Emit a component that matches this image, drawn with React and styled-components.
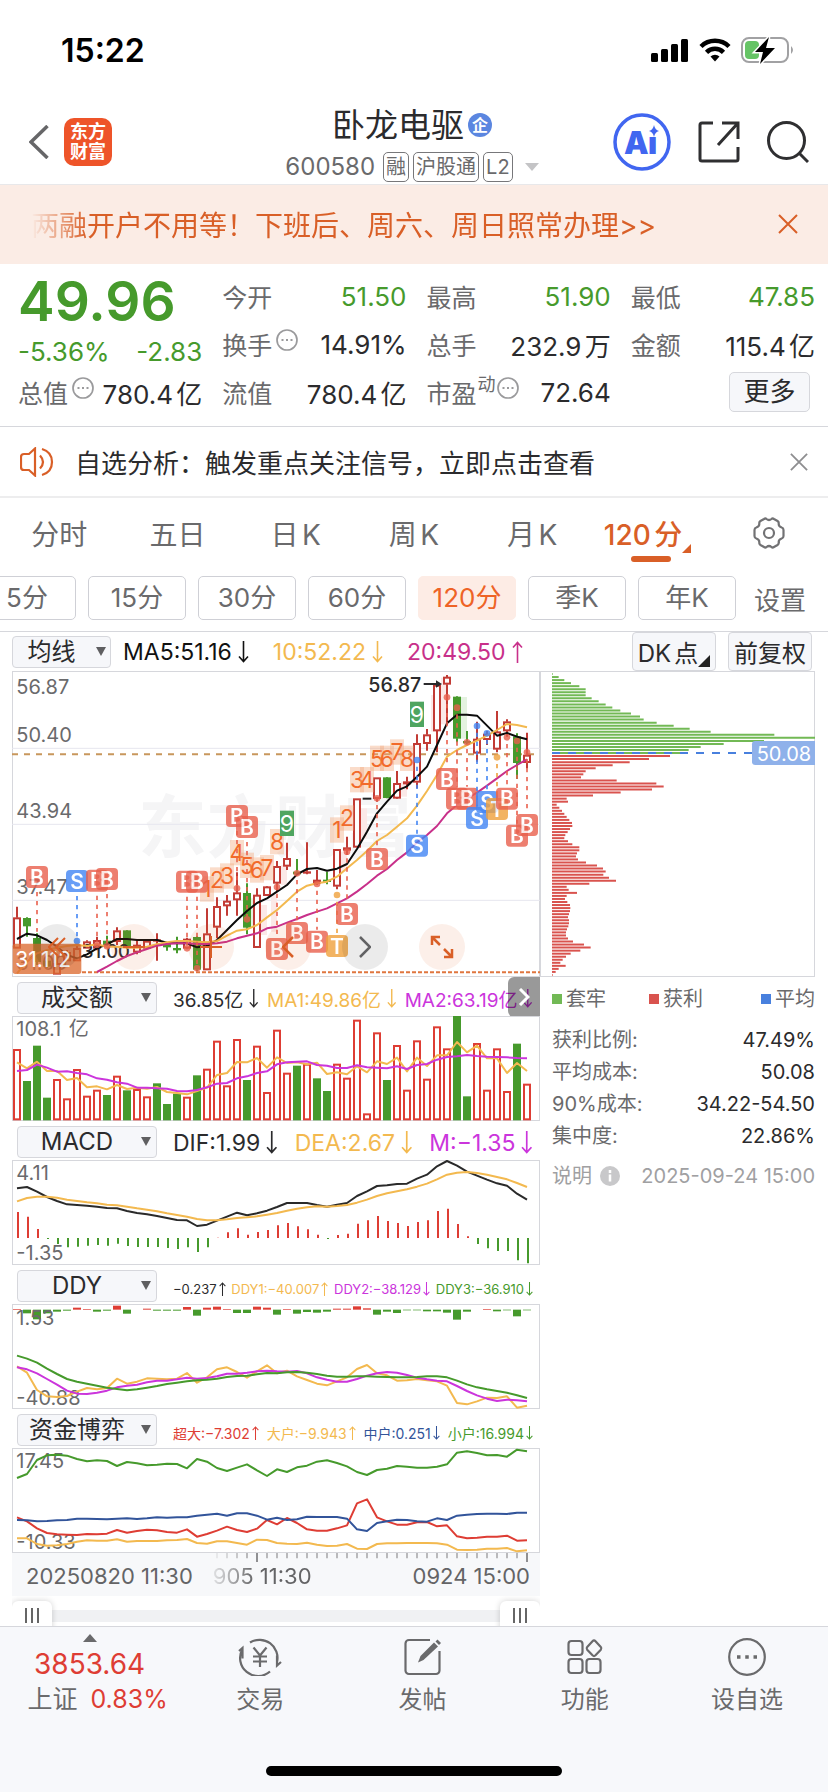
import React from "react";
import styled, { createGlobalStyle } from "styled-components";

const SANS = `Inter, "Noto Sans CJK SC", sans-serif`;

const C = {
  up: "#de3d34",
  candleUp: "#c23b35",
  down: "#469a2c",
  orange: "#d95f27",
  yellow: "#f3b94f",
  magenta: "#c8308a",
  violet: "#cb35dc",
  navy: "#32549a",
  ink: "#2b2b2d",
  grey: "#6a6a6c",
  line: "#d6d7dc",
  panel: "#f6f7fa",
};

const GlobalStyle = createGlobalStyle`
  * { box-sizing: border-box; }
  body { margin: 0; background: #fff; font-family: ${SANS}; color: ${C.ink}; text-autospace: normal; }
  button, select, input { font: inherit; color: inherit; margin: 0; }
  button { padding: 0; border: 0; background: none; cursor: pointer; }
  svg { display: block; }
`;

const Page = styled.div`
  display: flex;
  flex-direction: column;
  min-height: 100vh;
  overflow: hidden;
  white-space: nowrap;
`;

/* ---------- status bar and title ---------- */

const StatusBar = styled.div`
  display: flex;
  align-items: center;
  justify-content: space-between;
  height: 100px;
  padding: 0 33px 0 61px;
  font-size: 32px;
  font-weight: 600;
  color: #000;
`;

const StatusIcons = styled.div`
  display: flex;
  align-items: center;
  gap: 10px;
`;

const Header = styled.header`
  display: grid;
  grid-template-columns: 1fr auto 1fr;
  align-items: center;
  height: 85px;
  padding: 0 19px 4px 15px;
  border-bottom: 1px solid #e8e8ea;
`;

const HeaderSide = styled.div`
  display: flex;
  align-items: center;
  justify-content: ${(p) => (p.$end ? "flex-end" : "flex-start")};
  gap: ${(p) => (p.$end ? "27px" : "15px")};
  padding-left: 14px;
`;

const Logo = styled.a`
  display: grid;
  place-content: center;
  width: 48px;
  height: 48px;
  border-radius: 10px;
  background: #ee5429;
  color: #fff;
  font-size: 18px;
  font-weight: 700;
  line-height: 20px;
  text-decoration: none;
`;

const Identity = styled.div`
  display: flex;
  flex-direction: column;
  align-items: center;
  gap: 5px;
  padding-top: 4px;
`;

const StockName = styled.h1`
  display: flex;
  align-items: center;
  gap: 4px;
  margin: 0;
  font-size: 33px;
  font-weight: 400;
  line-height: 42px;
`;

const CompanyBadge = styled.span`
  display: grid;
  place-content: center;
  width: 24px;
  height: 24px;
  border-radius: 50%;
  background: #5b86e0;
  color: #fff;
  font-size: 16px;
  font-weight: 700;
`;

const CodeLine = styled.div`
  display: flex;
  align-items: center;
  gap: 4px;
  color: ${C.grey};
  font-size: 24px;
  line-height: 32px;
`;

const Code = styled.span`
  margin-right: 4px;
`;

const Tag = styled.span`
  padding: 0 2px;
  border: 1px solid #77777a;
  border-radius: 5px;
  font-size: 20px;
  line-height: 28px;
`;

const Caret = styled.svg`
  margin-left: 8px;
`;

/* ---------- banner, quote, notice ---------- */

const Banner = styled.div`
  display: flex;
  align-items: center;
  justify-content: space-between;
  height: 79px;
  padding: 0 30px 2px 31px;
  background: #fbece5;
  color: ${C.orange};
`;

const BannerLink = styled.a`
  color: inherit;
  font-size: 28px;
  text-decoration: none;
  -webkit-mask-image: linear-gradient(90deg, transparent, #000 56px);
  mask-image: linear-gradient(90deg, transparent, #000 56px);
`;

const Quote = styled.section`
  display: grid;
  grid-template-columns: repeat(4, 1fr);
  gap: 20px;
  padding: 8px 13px 10px 18px;
  border-bottom: 1px solid ${C.line};
  font-size: 26px;
`;

const QuoteColumn = styled.div`
  display: flex;
  flex-direction: column;
`;

const QuoteCell = styled.div`
  display: flex;
  align-items: center;
  justify-content: space-between;
  height: 48px;
  color: ${(p) => (p.$down ? C.down : C.ink)};
`;

const QuoteLabel = styled.span`
  display: flex;
  align-items: center;
  gap: 4px;
  color: ${C.grey};
  font-size: 25px;
`;

const InfoDots = styled.svg`
  margin-bottom: 8px;
`;

const Superscript = styled.sup`
  align-self: flex-start;
  margin: 0 -3px;
  font-size: 18px;
  line-height: 22px;
`;

const Price = styled.strong`
  height: 56px;
  color: ${C.down};
  font-size: 55px;
  font-weight: 600;
  line-height: 58px;
`;

const Change = styled.div`
  display: flex;
  justify-content: space-between;
  height: 40px;
  color: ${C.down};
  line-height: 48px;
`;

const MoreButton = styled.button`
  align-self: flex-end;
  width: 81px;
  height: 40px;
  margin: 4px 5px 0 0;
  border: 1px solid ${C.line};
  border-radius: 5px;
  background: ${C.panel};
  font-size: 26px;
  line-height: 36px;
`;

const Notice = styled.div`
  display: flex;
  align-items: center;
  height: 71px;
  padding: 0 20px;
  border-bottom: 2px solid #ededee;
  font-size: 26px;
`;

const NoticeText = styled.a`
  flex: 1;
  margin-left: 21px;
  color: inherit;
  text-decoration: none;
`;

/* ---------- period tabs ---------- */

const Tabs = styled.nav`
  display: grid;
  grid-template-columns: repeat(7, 1fr);
  height: 69px;
`;

const Tab = styled.button`
  position: relative;
  display: grid;
  place-content: center;
  color: ${(p) => (p.$active ? C.orange : C.grey)};
  font-size: 28px;
  font-weight: ${(p) => (p.$active ? 500 : 400)};
  &::after {
    content: "";
    display: ${(p) => (p.$active ? "block" : "none")};
    position: absolute;
    bottom: 5px;
    left: 50%;
    width: 40px;
    height: 6px;
    margin-left: -20px;
    border-radius: 3px;
    background: ${C.orange};
  }
`;

const TabText = styled.span`
  display: flex;
  align-items: flex-end;
  margin-right: 6px;
`;

const Periods = styled.div`
  display: flex;
  padding: 9px 0 11px;
  border-bottom: 1px solid ${C.line};
  color: ${C.grey};
  font-size: 26px;
  text-autospace: no-autospace;
`;

const ChipStrip = styled.div`
  display: flex;
  flex: 1;
  justify-content: flex-end;
  gap: 12px;
  min-width: 0;
  overflow: hidden;
`;

const Chip = styled.button`
  flex: 0 0 98px;
  height: 44px;
  border: 1px solid ${(p) => (p.$active ? "#fdece5" : "#cfd0d6")};
  border-radius: 5px;
  background: ${(p) => (p.$active ? "#fdece5" : "#fff")};
  color: ${(p) => (p.$active ? "#ee6326" : "inherit")};
  line-height: 40px;
`;

const SettingsButton = styled.button`
  width: 92px;
  padding-right: 4px;
`;

/* ---------- indicator headings ---------- */

const Overlays = styled.div`
  display: flex;
  align-items: center;
  height: 39px;
  padding: 0 16px 0 12px;
  font-size: 23px;
`;

const OverlayValues = styled.div`
  display: flex;
  flex: 1;
  gap: 24px;
  margin-left: 12px;
`;

const ToolButton = styled.button`
  display: flex;
  align-items: center;
  justify-content: center;
  width: 84px;
  height: 39px;
  margin-left: 12px;
  border: 1px solid ${C.line};
  border-radius: 4px;
  background: ${C.panel};
  font-size: 24px;
`;

const Corner = styled.svg`
  align-self: flex-end;
  margin-bottom: 3px;
`;

const PickerBox = styled.label`
  position: relative;
  flex: 0 0 ${(p) => (p.$small ? "99px" : "140px")};
  height: 32px;
`;

const PickerSelect = styled.select`
  width: 100%;
  height: 32px;
  padding: 0 20px 0 0;
  border: 1px solid ${C.line};
  border-radius: 4px;
  background: ${C.panel};
  color: ${C.ink};
  font-size: 24px;
  line-height: 30px;
  text-align: center;
  text-align-last: center;
  appearance: none;
`;

const PickerArrow = styled.svg`
  position: absolute;
  top: 11px;
  right: ${(p) => (p.$small ? "5px" : "6px")};
  pointer-events: none;
`;

const IndicatorHead = styled.div`
  position: relative;
  display: flex;
  align-items: center;
  gap: 16px;
  height: 39px;
  padding: 3px 7px 0 5px;
`;

const Values = styled.div`
  display: flex;
  flex: 1;
  justify-content: space-between;
  padding-top: ${(p) => (p.$size < 16 ? "5px" : "1px")};
  font-size: ${(p) => p.$size}px;
  text-autospace: no-autospace;
`;

const Value = styled.span`
  display: flex;
  align-items: center;
  gap: ${(p) => (p.$tight ? "2px" : "6px")};
  color: ${(p) => p.$color};
`;

const NextPane = styled.button`
  position: absolute;
  top: 0;
  right: 0;
  display: grid;
  place-content: center;
  width: 32px;
  height: 40px;
  border-radius: 6px 0 0 6px;
  background: rgba(0, 0, 0, 0.4);
`;

/* ---------- charts ---------- */

const Charts = styled.main`
  display: grid;
  grid-template-columns: 528fr 275fr;
  padding: 0 13px 0 12px;
`;

const Column = styled.div`
  min-width: 0;
`;

const Frame = styled.div`
  position: relative;
  box-shadow: inset 0 0 0 1px ${C.line};
`;

const Plot = styled.svg`
  width: 100%;
  height: auto;
  font-family: ${SANS};
`;

const ChartControls = styled.div`
  position: absolute;
  bottom: 7px;
  left: 22px;
  display: flex;
  gap: 31px;
`;

const RoundButton = styled.button`
  display: grid;
  place-content: center;
  width: 46px;
  height: 46px;
  border-radius: 50%;
  background: ${(p) => (p.$muted ? "rgba(0,0,0,.08)" : "rgba(226,96,40,.1)")};
  color: ${(p) => (p.$dark ? "#626264" : C.orange)};
`;

const Axis = styled.div`
  background: #f7f8fa;
  height: 43px;
`;

const AxisLabels = styled.div`
  display: flex;
  padding: 0 10px 0 14px;
  color: #646466;
  font-size: 22px;
  line-height: 28px;
`;

const AxisLabel = styled.span`
  flex: ${(p) => (p.$last ? "1" : "none")};
  margin-left: ${(p) => (p.$faded ? "20px" : "0")};
  text-align: ${(p) => (p.$last ? "right" : "left")};
  mask-image: ${(p) => (p.$faded ? "linear-gradient(90deg, rgba(0,0,0,.15), #000 42px)" : "none")};
`;

const RangeBox = styled.div`
  position: relative;
  height: 30px;
  overflow: hidden;
  &::before {
    content: "";
    display: block;
    height: 12px;
    margin-top: 14px;
    background: #f0f1f3;
  }
`;

const RangeInput = styled.input`
  position: absolute;
  top: 5px;
  left: 0;
  width: 100%;
  height: 36px;
  background: none;
  appearance: none;
  pointer-events: none;
  &::-webkit-slider-thumb {
    appearance: none;
    width: 40px;
    height: 36px;
    border-radius: 6px;
    background:
      linear-gradient(#666, #666) 13px 7px / 2px 15px no-repeat,
      linear-gradient(#666, #666) 19px 7px / 2px 15px no-repeat,
      linear-gradient(#666, #666) 25px 7px / 2px 15px no-repeat,
      #fff;
    box-shadow: 0 0 6px rgba(0, 0, 0, 0.18);
    pointer-events: auto;
  }
`;

/* ---------- cost distribution ---------- */

const Legend = styled.div`
  display: grid;
  grid-template-columns: 97fr 112fr auto;
  padding: 8px 0 9px 12px;
  color: ${C.grey};
  font-size: 20px;
  line-height: 28px;
`;

const LegendItem = styled.span`
  display: flex;
  align-items: center;
  gap: 4px;
  &::before {
    content: "";
    width: 10px;
    height: 10px;
    background: ${(p) => p.$color};
  }
`;

const Facts = styled.dl`
  margin: 0;
  padding: 2px 0 0 12px;
  font-size: 20px;
  line-height: 32px;
`;

const Fact = styled.div`
  display: flex;
  justify-content: space-between;
`;

const FactName = styled.dt`
  color: ${C.grey};
`;

const FactValue = styled.dd`
  margin: 0;
`;

const Explain = styled.div`
  display: flex;
  align-items: center;
  justify-content: space-between;
  padding: 8px 0 0 12px;
  color: #a0a0a2;
  font-size: 20px;
  line-height: 32px;
`;

const ExplainButton = styled.button`
  display: flex;
  align-items: center;
  gap: 8px;
`;

/* ---------- bottom bar ---------- */

const BottomBar = styled.footer`
  flex: 1;
  display: flex;
  flex-direction: column;
  justify-content: space-between;
  align-items: center;
  padding-bottom: 16px;
  border-top: 1px solid ${C.line};
  background: #f7f8fb;
`;

const BottomNav = styled.nav`
  display: grid;
  grid-template-columns: 179fr repeat(4, 162fr);
  width: 100%;
  height: 100px;
`;

const NavItem = styled.button`
  display: flex;
  flex-direction: column;
  align-items: center;
  gap: 7px;
  padding-top: 11px;
  color: ${C.grey};
  font-size: 24px;
  line-height: 34px;
`;

const IndexItem = styled.button`
  display: flex;
  flex-direction: column;
  align-items: center;
  padding-top: 7px;
  color: ${C.up};
  font-size: 25px;
  line-height: 34px;
`;

const IndexValue = styled.span`
  margin-top: 4px;
  font-size: 28px;
  line-height: 36px;
`;

const IndexLine = styled.span`
  display: flex;
  gap: 13px;
  padding-left: 16px;
`;

const Muted = styled.span`
  color: ${C.grey};
`;

const HomeIndicator = styled.div`
  width: 296px;
  height: 10px;
  border-radius: 5px;
  background: #000;
`;

/* ---------- data ---------- */

const STEP = 30;
const px = (i) => 51 + i * STEP;

// high, body top, body bottom, low, u = up / d = down
const CANDLES = [
  [725, 758, 850, 850, "u"], [757, 760, 783, 815, "d"], [805, 820, 890, 900, "d"], [880, 888, 904, 908, "d"],
  [870, 895, 928, 928, "u"], [855, 862, 888, 888, "u"], [842, 850, 888, 888, "u"], [826, 830, 850, 850, "u"],
  [815, 826, 850, 856, "u"], [812, 828, 838, 848, "d"], [787, 797, 830, 840, "u"], [795, 797, 845, 852, "d"],
  [826, 840, 862, 868, "u"], [826, 828, 850, 852, "u"], [805, 824, 828, 887, "u"], [832, 838, 846, 857, "d"],
  [815, 850, 854, 865, "d"], [818, 822, 850, 853, "u"], [814, 817, 913, 918, "d"], [730, 806, 915, 915, "u"],
  [697, 724, 787, 820, "u"], [690, 708, 723, 752, "u"], [622, 683, 705, 752, "u"], [655, 685, 787, 808, "d"],
  [670, 690, 848, 848, "u"], [663, 665, 692, 692, "u"], [588, 604, 655, 680, "u"], [533, 580, 604, 615, "u"],
  [582, 621, 627, 630, "d"], [532, 620, 624, 628, "u"], [615, 645, 655, 660, "u"], [620, 645, 648, 658, "d"],
  [553, 553, 664, 673, "u"], [515, 548, 556, 570, "u"], [401, 401, 547, 547, "u"], null,
  [338, 338, 401, 410, "u"], [336, 338, 398, 400, "d"], [318, 355, 400, 402, "u"], [335, 350, 357, 373, "u"],
  [208, 235, 352, 370, "u"], [192, 209, 236, 257, "u"], [56, 60, 198, 262, "u"], [30, 36, 58, 180, "u"],
  [94, 96, 220, 232, "d"], [198, 229, 234, 240, "d"], [170, 222, 265, 290, "u"], [198, 207, 224, 240, "u"],
  [138, 200, 253, 262, "u"], [163, 170, 198, 215, "u"], [205, 215, 293, 342, "d"], [203, 270, 293, 310, "u"],
];

const MA5 = [822, 806, 811, 825, 845, 870, 880, 868, 850, 838, 822, 822, 825, 825, 825, 833, 835, 835, 847, 843, 825, 795, 765, 738, 714, 700, 680, 660, 628, 612, 609, 617, 611, 597, 552, 500, 445, 410, 377, 364, 335, 305, 240, 175, 149, 149, 152, 182, 212, 204, 215, 223];
const MA10 = [925, 890, 865, 855, 848, 843, 840, 843, 838, 845, 845, 848, 848, 845, 838, 832, 828, 828, 830, 832, 828, 812, 797, 793, 780, 757, 735, 708, 680, 662, 655, 650, 635, 610, 585, 558, 528, 510, 485, 460, 422, 378, 330, 275, 255, 240, 227, 212, 195, 177, 180, 187];
const MA20 = [921, 905, 888, 873, 862, 852, 842, 837, 835, 835, 837, 837, 835, 830, 820, 812, 805, 790, 785, 773, 762, 750, 740, 730, 715, 700, 680, 657, 632, 612, 585, 562, 532, 510, 483, 445, 420, 400, 383, 362, 340, 318, 300, 283];

// candle index, badge centre, signal point, kind
const SIGNALS = [
  [2, 636, 800, "B"], [6, 648, 828, "S"], [8, 647, 840, "B"], [9, 642, 844, "B"], [17, 650, 850, "B"],
  [18, 650, 910, "B"], [22, 453, 670, "B"], [23, 486, 763, "B"], [26, 852, 666, "B"], [28, 804, 625, "B"],
  [30, 830, 657, "B"], [32, 843, 690, "T"], [33, 747, 560, "B"], [36, 582, 400, "B"], [40, 542, 285, "S"],
  [43, 342, 97, "B"], [44, 401, 128, "B"], [45, 401, 232, "B"], [46, 459, 183, "S"], [47, 411, 205, "S"],
  [48, 432, 277, "T"], [49, 401, 217, "B"], [50, 512, 228, "B"], [51, 480, 262, "B"],
];
const SIGNAL_COLORS = { B: "#e9604d", S: "#4285f4", T: "#f0a13c" };

// candle index, centre, number
const COUNTS = [
  [19, 672, 1], [20, 645, 2], [21, 633, 3], [22, 563, 4], [23, 601, 5], [24, 615, 6], [25, 608, 7], [26, 530, 8], [27, 475, 9],
  [32, 495, 1], [33, 459, 2], [34, 344, 3], [35, 344, 4], [36, 280, 5], [37, 280, 6], [38, 261, 7], [39, 280, 8], [40, 148, 9],
];

const SHADES = [
  [25, 690, 110, "u"], [24, 720, 90, "u"], [23, 700, 85, "d"], [26, 600, 60, "u"], [34, 430, 90, "u"],
  [36, 345, 55, "u"], [38, 350, 45, "u"], [41, 90, 110, "u"], [42, 38, 140, "u"], [44, 96, 125, "d"], [32, 560, 60, "u"],
];

const VOLUME = [224, -320, -214, -370, 314, 372, 284, 364, 346, -362, 304, -348, 344, 366, -327, -389, -358, 367, -303, 283, 199, 333, 194, -317, 214, 353, 166, 295, -274, 268, -312, -350, 268, 310, 136, 417, 174, -317, 212, 346, 198, 313, 156, 222, -125, -366, 206, 346, 222, 350, -208, 328];
const VOL1 = [264, 282, 262, 290, 290, 317, 311, 339, 336, 345, 332, 344, 340, 343, 338, 353, 356, 360, 350, 340, 302, 296, 263, 264, 251, 280, 249, 266, 264, 270, 265, 299, 294, 300, 276, 294, 261, 269, 250, 291, 250, 275, 243, 243, 203, 234, 214, 252, 252, 296, 266, 290];
const VOL2 = [290, 287, 271, 280, 292, 291, 296, 300, 312, 316, 324, 328, 340, 340, 342, 343, 350, 351, 347, 339, 328, 326, 312, 306, 296, 291, 270, 264, 262, 261, 272, 274, 281, 281, 273, 279, 280, 282, 276, 284, 272, 269, 256, 248, 246, 242, 245, 247, 248, 249, 251, 252];

const MACD = [712, 726, 763, 793, 808, 818, 816, 813, 811, 813, 807, 814, 817, 817, 817, 820, 823, 818, 832, 818, 789, 773, 761, 780, 772, 766, 752, 745, 755, 764, 780, 793, 781, 777, 747, 737, 724, 739, 745, 754, 742, 737, 709, 702, 748, 785, 808, 821, 829, 829, 857, 866];
const DIF = [641, 637, 651, 667, 679, 689, 691, 693, 696, 700, 701, 709, 715, 719, 724, 730, 736, 737, 754, 750, 738, 726, 714, 722, 716, 708, 697, 685, 685, 685, 691, 696, 690, 685, 664, 650, 634, 632, 628, 627, 612, 600, 575, 559, 573, 591, 603, 615, 626, 633, 657, 675];
const DEA = [680, 670, 666, 666, 669, 675, 679, 683, 686, 690, 692, 696, 701, 705, 710, 716, 721, 726, 733, 737, 737, 734, 730, 728, 725, 720, 715, 708, 702, 698, 695, 696, 694, 691, 684, 675, 664, 656, 650, 644, 636, 627, 614, 600, 594, 592, 595, 600, 607, 614, 625, 637];

const DDX = [145, 158, 176, 158, 153, 150, 141, 145, 153, 150, 135, 159, 147, 144, 150, 150, 150, 139, 165, 141, 138, 145, 157, 157, 138, 141, 162, 145, 159, 154, 156, 153, 144, 144, 137, 143, 162, 153, 157, 149, 149, 152, 152, 156, 177, 153, 147, 145, 152, 149, 167, 149];
const DDY1 = [317, 336, 388, 407, 409, 406, 393, 382, 386, 382, 354, 369, 363, 353, 354, 356, 354, 337, 366, 350, 326, 320, 334, 351, 332, 314, 338, 330, 347, 358, 369, 374, 362, 350, 325, 313, 338, 344, 360, 359, 355, 359, 362, 375, 427, 431, 422, 411, 412, 407, 441, 435];
const DDY2 = [320, 326, 338, 355, 372, 390, 399, 400, 396, 390, 380, 375, 372, 365, 360, 360, 356, 351, 354, 352, 347, 339, 339, 336, 332, 330, 332, 333, 331, 338, 350, 357, 363, 363, 355, 345, 338, 334, 336, 343, 351, 356, 360, 362, 376, 391, 404, 414, 421, 417, 419, 422];
const DDY3 = [285, 294, 306, 324, 340, 355, 363, 369, 375, 381, 385, 389, 386, 381, 376, 370, 366, 362, 359, 357, 354, 349, 346, 345, 341, 337, 338, 335, 334, 336, 340, 345, 348, 348, 347, 347, 348, 349, 350, 350, 349, 347, 347, 350, 360, 371, 380, 386, 391, 396, 404, 412];

const SMALL = [652, 640, 598, 584, 582, 585, 595, 602, 599, 601, 616, 604, 608, 614, 612, 609, 610, 623, 595, 603, 622, 631, 621, 611, 629, 646, 626, 634, 620, 615, 603, 599, 607, 617, 634, 643, 628, 624, 616, 618, 621, 621, 618, 611, 576, 572, 577, 584, 583, 588, 567, 572];
const MEDIUM = [778, 779, 782, 781, 779, 778, 774, 774, 775, 776, 774, 773, 775, 773, 770, 771, 770, 770, 765, 762, 759, 765, 758, 758, 765, 777, 771, 778, 776, 768, 769, 769, 769, 774, 806, 811, 787, 782, 777, 778, 782, 783, 773, 778, 765, 762, 760, 759, 759, 760, 756, 756];
const HUGE = [770, 782, 803, 817, 821, 822, 823, 820, 821, 819, 808, 816, 811, 807, 809, 814, 816, 806, 828, 820, 810, 798, 808, 814, 804, 778, 791, 772, 787, 806, 810, 810, 803, 794, 728, 716, 770, 782, 792, 792, 785, 784, 797, 794, 827, 833, 831, 828, 828, 825, 840, 839];
const LARGE = [833, 833, 850, 855, 854, 850, 843, 839, 840, 840, 836, 843, 841, 841, 841, 839, 838, 835, 847, 849, 842, 842, 847, 852, 837, 838, 847, 849, 850, 846, 852, 856, 855, 850, 864, 865, 850, 848, 848, 847, 847, 847, 848, 852, 867, 868, 867, 864, 864, 862, 872, 869];

const TRAPPED = [38, 56, 73, 93, 118, 137, 137, 137, 155, 176, 197, 217, 241, 273, 300, 311, 350, 401, 449, 512, 703, 827, 672, 551, 482, 446, 440];
const PROFIT = [390, 327, 269, 218, 167, 137, 130, 123, 230, 349, 371, 336, 242, 159, 80, 84, 50, 58, 66, 73, 80, 88, 96, 97, 90, 83, 76, 73, 84, 97, 118, 118, 111, 108, 114, 138, 171, 189, 197, 190, 207, 228, 148, 80, 86, 111, 80, 75, 82, 90, 91, 90, 87, 84, 87, 87, 85, 81, 78, 78, 84, 99, 132, 152, 121, 92, 78, 68, 61, 77, 56, 47, 38];

/* ---------- drawing helpers ---------- */

function Line({ data, color, start = 0, width = 6 }) {
  const points = data.map((y, i) => `${px(i + start)},${y}`).join(" ");
  return <polyline points={points} fill="none" stroke={color} strokeWidth={width} strokeLinejoin="round" />;
}

function ScaleText({ y, x = 49, children }) {
  return <text x={x} y={y} fontSize="60" fill="#6a6a6c">{children}</text>;
}

function Arrow({ up, height }) {
  return (
    <svg width={height / 2} height={height} viewBox="0 0 11 22" fill="none" stroke="currentColor" strokeWidth="1.6">
      <path d={up ? "M5.5 22V1M1 6.5l4.5-5 4.5 5" : "M5.5 0v21M1 15.500l4.500 5 4.500-5"} />
    </svg>
  );
}

function Cross({ size, color, width = 2 }) {
  return (
    <svg width={size} height={size} viewBox="0 0 20 20" stroke={color} strokeWidth={width}>
      <path d="M1 1l18 18M19 1L1 19" />
    </svg>
  );
}

function Dots() {
  return (
    <InfoDots width="22" height="22" viewBox="0 0 22 22" fill="none" stroke="#9a9a9c">
      <circle cx="11" cy="11" r="10" strokeWidth="1.700" />
      <path d="M5.500 11h2M10 11h2M14.500 11h2" strokeWidth="2" />
    </InfoDots>
  );
}

function Picker({ label, value, options, small }) {
  return (
    <PickerBox $small={small}>
      <PickerSelect defaultValue={value} aria-label={label}>
        {options.map((o) => <option key={o}>{o}</option>)}
      </PickerSelect>
      <PickerArrow $small={small} width="10" height="9" viewBox="0 0 10 9"><path d="M0 0h10L5 9z" fill="#5f5f61" /></PickerArrow>
    </PickerBox>
  );
}

const INDICATORS = ["成交额", "MACD", "DDY", "资金博弈"];

function Indicator({ name, size, values, children, next }) {
  return (
    <>
      <IndicatorHead>
        <Picker label="指标" value={name} options={INDICATORS} />
        <Values $size={size}>
          {values.map(([text, color, up]) => (
            <Value key={text} $color={color} $tight={size < 16}>{text}<Arrow up={up} height={size < 16 ? 14 : size} /></Value>
          ))}
        </Values>
        {next && (
          <NextPane aria-label="展开">
            <svg width="12" height="18" viewBox="0 0 12 18" fill="none" stroke="#fff" strokeWidth="3"><path d="M2 1l8 8-8 8" /></svg>
          </NextPane>
        )}
      </IndicatorHead>
      <Frame>{children}</Frame>
    </>
  );
}

function CandleChart() {
  return (
    <Plot viewBox="36 18 1584 918" role="img" aria-label="120分K线">
      <text x="415" y="560" fontSize="205" fontWeight="700" fill="#f5f5f6">东方财富</text>
      <path d="M36 250H1620M36 478H1620M36 706H1620" stroke="#e6e6ee" strokeWidth="3" />
      {SHADES.map(([i, y, h, k]) => (
        <rect key={i} x={px(i) + 12} y={y} width="18" height={h} fill={k === "u" ? "#fbe9e8" : "#e4f2e0"} />
      ))}
      <path d="M36 268H1602" stroke="#c8975c" strokeWidth="6" strokeDasharray="18 18" />
      <path d="M246 922H1620" stroke="#e0763f" strokeWidth="6" strokeDasharray="12 6" />
      <ScaleText y={88}>56.87</ScaleText>
      <ScaleText y={232}>50.40</ScaleText>
      <ScaleText y={458}>43.94</ScaleText>
      <ScaleText y={687}>37.47</ScaleText>
      <ScaleText y={916}>31.00</ScaleText>
      {CANDLES.map((c, i) => {
        if (!c) return <path key={i} d={`M${px(i) - 13} 401h26`} stroke="#222" strokeWidth="6" />;
        const [hi, top, bottom, lo, kind] = c;
        const color = kind === "u" ? C.candleUp : C.down;
        return (
          <g key={i} stroke={color} strokeWidth="6">
            <path d={`M${px(i)} ${hi}V${top}M${px(i)} ${bottom}V${lo}`} />
            <rect x={px(i) - 9} y={top + 2} width="18" height={Math.max(bottom - top - 4, 1)} fill={kind === "u" ? "#fff" : color} />
          </g>
        );
      })}
      <text x="246" y="879" fontSize="55" fontWeight="500" fill={C.ink}>31.00</text>
      <text x="1105" y="80" fontSize="59" fontWeight="500" fill={C.ink}>56.87</text>
      <path d="M1271 57h48" stroke={C.ink} strokeWidth="6" />
      <path d="M1308 46l18 11-18 11z" fill={C.ink} />
      {COUNTS.map(([i, y, n]) => (
        <g key={i}>
          <rect x={px(i) - 21} y={y - 38} width="42" height="76" fill={n === 9 ? "#4fa560" : "#f2a274"} fillOpacity={n === 9 ? 1 : 0.38} />
          <text x={px(i)} y={y + 25} fontSize="69" textAnchor="middle" fill={n === 9 ? "#fff" : "#f26a2a"}>{n}</text>
        </g>
      ))}
      <Line data={MA5} color="#0c0c0c" />
      <Line data={MA10} color={C.yellow} />
      <Line data={MA20} color={C.magenta} start={8} />
      {SIGNALS.map(([i, y, dot, kind]) => (
        <g key={i} opacity="0.8">
          <path d={`M${px(i)} ${y < dot ? y + 45 : dot + 20}V${y < dot ? dot : y - 36}`} stroke={SIGNAL_COLORS[kind]} strokeWidth="6" strokeDasharray="13 14" />
          {dot !== 800 && <circle cx={px(i)} cy={dot} r="10" fill={SIGNAL_COLORS[kind]} />}
          <rect x={px(i) - 33} y={y - 33} width="66" height="66" rx="12" fill={SIGNAL_COLORS[kind]} />
          <text x={px(i)} y={y + 23} fontSize="63" fontWeight="600" textAnchor="middle" fill="#fff">{kind}</text>
        </g>
      ))}
      <rect x="38" y="836" width="206" height="91" rx="8" fill="#dd6c32" fillOpacity="0.78" />
      <text x="46" y="906" fontSize="63" fill="#fff">31.112</text>
    </Plot>
  );
}

function VolumeChart() {
  return (
    <Plot viewBox="36 125 1584 315" role="img" aria-label="成交额">
      {VOLUME.map((v, i) => {
        const y = Math.abs(v);
        return v < 0
          ? <rect key={i} x={px(i) - 12} y={y} width="24" height={438 - y} fill={C.down} />
          : <rect key={i} x={px(i) - 9} y={y + 3} width="18" height={432 - y} fill="#fff" stroke={C.up} strokeWidth="6" />;
      })}
      <ScaleText y={186}>108.1亿</ScaleText>
      <Line data={VOL1} color={C.yellow} />
      <Line data={VOL2} color={C.violet} />
    </Plot>
  );
}

function MacdChart() {
  return (
    <Plot viewBox="36 556 1584 315" role="img" aria-label="MACD">
      {MACD.map((y, i) => (
        <path key={i} d={`M${px(i) + 3} 790V${y}`} stroke={y < 790 ? C.up : C.down} strokeWidth="6" />
      ))}
      <ScaleText y={617}>4.11</ScaleText>
      <ScaleText y={857}>-1.35</ScaleText>
      <Line data={DIF} color="#2a2a2a" />
      <Line data={DEA} color={C.yellow} />
    </Plot>
  );
}

function DdyChart() {
  return (
    <Plot viewBox="36 130 1584 315" role="img" aria-label="DDY">
      {DDX.map((y, i) => (
        <rect key={i} x={px(i) - 12} y={Math.min(y, 147)} width="24" height={Math.abs(y - 147)} fill={y < 147 ? C.up : C.down} />
      ))}
      <ScaleText y={192}>1.53</ScaleText>
      <ScaleText y={432}>-40.88</ScaleText>
      <Line data={DDY1} color={C.yellow} />
      <Line data={DDY2} color={C.violet} />
      <Line data={DDY3} color={C.down} />
    </Plot>
  );
}

function FundsChart() {
  return (
    <Plot viewBox="36 562 1584 315" role="img" aria-label="资金博弈">
      <ScaleText y={623}>17.45</ScaleText>
      <ScaleText y={864}>-10.33</ScaleText>
      <Line data={SMALL} color={C.down} />
      <Line data={HUGE} color={C.up} />
      <Line data={MEDIUM} color={C.navy} />
      <Line data={LARGE} color={C.yellow} />
    </Plot>
  );
}

function CostChart() {
  return (
    <Plot viewBox="0 138 825 918" role="img" aria-label="筹码分布">
      {[...TRAPPED, ...PROFIT].map((x, i) => (
        <path key={i} d={`M36 ${147 + i * 9.12}H${x}`} stroke={i < TRAPPED.length ? "#72b955" : "#d9534e"} strokeWidth="6" />
      ))}
      <path d="M36 384H640" stroke="#4880de" strokeWidth="6" strokeDasharray="24 24" />
      <path d="M646 348H825V420H646q-10 0-10-10V358q0-10 10-10z" fill="#8fb1ea" />
      <text x="650" y="407" fontSize="60" fill="#fff">50.08</text>
    </Plot>
  );
}

function AxisTicks() {
  const ticks = [];
  for (let i = 20; i < 52; i += 1) {
    const major = i === 24 || i === 51;
    ticks.push(
      <path key={i} d={`M${px(i)} 0V${major ? 27 : 16}`} stroke={major ? "#909092" : "#b9b9bb"} strokeWidth="6" opacity={i < 24 ? 0.25 * (i - 19) : 1} />
    );
  }
  return <Plot viewBox="36 0 1584 27" aria-hidden="true">{ticks}</Plot>;
}

/* ---------- page ---------- */

const NAV = [
  ["交易", <svg key="t" width="44" height="38" viewBox="0 0 44 38" fill="none" stroke="#6a6a6c" strokeWidth="2.200">
    <path d="M12 4.500A18 18 0 0 1 39 24M32 33.500A18 18 0 0 1 4.500 11M4.500 20.500V10L1 13M39 17.500V27.500L43 24" />
    <path d="M15.500 9.500l6.500 8 6.500-8M22 17.500v11.500M15 18.500h14M15 23.500h14" />
  </svg>],
  ["发帖", <svg key="p" width="38" height="38" viewBox="0 0 38 38" fill="none" stroke="#6a6a6c" strokeWidth="2.200">
    <path d="M26 2H5a3.500 3.500 0 0 0-3.500 3.500v27A3.500 3.500 0 0 0 5 36h27a3.500 3.500 0 0 0 3.500-3.500V13" />
    <path d="M14 24.500L16.500 18 30 4.500l4 4L19.500 22z" fill="#6a6a6c" stroke="none" />
    <path d="M31.500 3.500l2-2 3.500 3.500-2 2z" fill="#6a6a6c" stroke="none" />
  </svg>],
  ["功能", <svg key="f" width="38" height="38" viewBox="0 0 38 38" fill="none" stroke="#6a6a6c" strokeWidth="2.200">
    <rect x="2.500" y="3" width="14" height="14" rx="3" /><rect x="2.500" y="21" width="14" height="14" rx="3" />
    <rect x="20.500" y="21" width="14" height="14" rx="3" /><path d="M26.500 3.200q1.500-1.600 3 0l5.300 5.700q1.200 1.400 0 2.800l-5.300 5.600q-1.500 1.500-3 0l-5.300-5.600q-1.200-1.400 0-2.800z" />
  </svg>],
  ["设自选", <svg key="s" width="38" height="38" viewBox="0 0 38 38" fill="none" stroke="#6a6a6c" strokeWidth="2.200">
    <circle cx="19" cy="19" r="17.800" /><path d="M9 19h3.500M17.250 19h3.500M25.500 19h3.500" strokeWidth="3.500" />
  </svg>],
];

export default function App() {
  return (
    <Page>
      <GlobalStyle />
      <StatusBar>
        <span>15:22</span>
        <StatusIcons>
          <svg width="38" height="25" viewBox="0 0 38 25">
            <rect x="0" y="15" width="7" height="9" rx="1.500" /><rect x="10" y="11" width="7" height="13" rx="1.500" />
            <rect x="20" y="6" width="7" height="18" rx="1.500" /><rect x="30" y="1" width="7" height="23" rx="1.500" />
          </svg>
          <svg width="32" height="24" viewBox="0 0 32 24" fill="none" stroke="#000" strokeWidth="4.500">
            <path d="M2 8.500a20 20 0 0 1 28 0M7.500 14.300a12 12 0 0 1 17 0" />
            <path d="M11.500 18.500a6.500 6.500 0 0 1 9 0L16 23.500z" fill="#000" stroke="none" />
          </svg>
          <svg width="54" height="28" viewBox="0 0 54 28">
            <rect x="1" y="2" width="46" height="24" rx="7" fill="none" stroke="#a1a1a3" strokeWidth="2" />
            <path d="M50 10q4 4 0 8z" fill="#a1a1a3" />
            <rect x="4" y="5" width="14" height="18" rx="4" fill="#66c466" />
            <path d="M28 1L14 16h8l-3 12 15-16h-9z" stroke="#fff" strokeWidth="3" paintOrder="stroke" />
          </svg>
        </StatusIcons>
      </StatusBar>

      <Header>
        <HeaderSide>
          <button aria-label="返回">
            <svg width="20" height="34" viewBox="0 0 20 34" fill="none" stroke="#666668" strokeWidth="3.500"><path d="M18.500 1L2 17l16.500 16" /></svg>
          </button>
          <Logo href="#home"><span>东方</span><span>财富</span></Logo>
        </HeaderSide>
        <Identity>
          <StockName>卧龙电驱<CompanyBadge>企</CompanyBadge></StockName>
          <CodeLine>
            <Code>600580</Code><Tag>融</Tag><Tag>沪股通</Tag><Tag>L2</Tag>
            <Caret width="14" height="8" viewBox="0 0 14 8"><path d="M0 0h14L7 8z" fill="#c4c4c6" /></Caret>
          </CodeLine>
        </Identity>
        <HeaderSide $end>
          <button aria-label="Ai">
            <svg width="58" height="58" viewBox="0 0 58 58" fontFamily="Inter, sans-serif">
              <circle cx="29" cy="29" r="27" fill="none" stroke="#4166f0" strokeWidth="3.500" />
              <text x="11" y="41" fontSize="31" fontWeight="900" fill="#4166f0">A</text>
              <text x="35" y="41" fontSize="31" fontWeight="900" fill="#4166f0">ı</text>
              <path d="M41 12q1 5 5 6-4 1-5 6-1-5-5-6 4-1 5-6z" fill="#4166f0" />
            </svg>
          </button>
          <button aria-label="分享">
            <svg width="42" height="42" viewBox="0 0 42 42" fill="none" stroke="#2f2f31" strokeWidth="3">
              <path d="M15 2H4q-2 0-2 2v34q0 2 2 2h34q2 0 2-2V26M24 2h16v16M40 2L20 24" />
            </svg>
          </button>
          <button aria-label="搜索">
            <svg width="42" height="44" viewBox="0 0 42 44" fill="none" stroke="#2f2f31" strokeWidth="3">
              <circle cx="19.500" cy="20.500" r="18" /><path d="M32 33l9 9" />
            </svg>
          </button>
        </HeaderSide>
      </Header>

      <Banner>
        <BannerLink href="#margin">两融开户不用等！下班后、周六、周日照常办理&gt;&gt;</BannerLink>
        <button aria-label="关闭"><Cross size={20} color={C.orange} /></button>
      </Banner>

      <Quote>
        <QuoteColumn>
          <Price>49.96</Price>
          <Change><span>-5.36%</span><span>-2.83</span></Change>
          <QuoteCell><QuoteLabel>总值<Dots /></QuoteLabel>780.4亿</QuoteCell>
        </QuoteColumn>
        <QuoteColumn>
          <QuoteCell $down><QuoteLabel>今开</QuoteLabel>51.50</QuoteCell>
          <QuoteCell><QuoteLabel>换手<Dots /></QuoteLabel>14.91%</QuoteCell>
          <QuoteCell><QuoteLabel>流值</QuoteLabel>780.4亿</QuoteCell>
        </QuoteColumn>
        <QuoteColumn>
          <QuoteCell $down><QuoteLabel>最高</QuoteLabel>51.90</QuoteCell>
          <QuoteCell><QuoteLabel>总手</QuoteLabel>232.9万</QuoteCell>
          <QuoteCell><QuoteLabel>市盈<Superscript>动</Superscript><Dots /></QuoteLabel>72.64</QuoteCell>
        </QuoteColumn>
        <QuoteColumn>
          <QuoteCell $down><QuoteLabel>最低</QuoteLabel>47.85</QuoteCell>
          <QuoteCell><QuoteLabel>金额</QuoteLabel>115.4亿</QuoteCell>
          <MoreButton>更多</MoreButton>
        </QuoteColumn>
      </Quote>

      <Notice>
        <svg width="34" height="30" viewBox="0 0 34 30" fill="none" stroke={C.orange} strokeWidth="2.200">
          <path d="M15 1.500v27L9 23H4q-3 0-3-3V10q0-3 3-3h5zM20 8.500q6 6.500 0 13M22 2q10 3 10 13T22 28" />
        </svg>
        <NoticeText href="#analysis">自选分析：触发重点关注信号，立即点击查看</NoticeText>
        <button aria-label="关闭提示"><Cross size={18} color="#8e8e90" /></button>
      </Notice>

      <Tabs>
        {["分时", "五日", "日K", "周K", "月K"].map((t) => <Tab key={t}>{t}</Tab>)}
        <Tab $active>
          <TabText>120分<svg width="9" height="9" viewBox="0 0 9 9"><path d="M9 0v9H0z" fill={C.orange} /></svg></TabText>
        </Tab>
        <Tab aria-label="图表设置">
          <svg width="34" height="32" viewBox="0 0 34 32" fill="none" stroke="#727274" strokeWidth="2.200">
            <path d="M12 2q1.500-1 2.500 0 2.500 2 5 0 1-1 2.500 0l3.500 2q1.500 1 1.200 2.500-.3 3 3 4 1.800.5 1.800 2.500v6q0 2-1.800 2.500-3.300 1-3 4 .3 1.500-1.200 2.500L22 30q-1.500 1-2.500 0-2.500-2-5 0-1 1-2.500 0l-3.500-2q-1.500-1-1.200-2.500.3-3-3-4Q2.500 21 2.500 19v-6q0-2 1.800-2.500 3.300-1 3-4Q7 5 8.500 4z" />
            <circle cx="17" cy="16" r="5" />
          </svg>
        </Tab>
      </Tabs>

      <Periods>
        <ChipStrip>
          {["5分", "15分", "30分", "60分", "120分", "季K", "年K"].map((t) => <Chip key={t} $active={t === "120分"}>{t}</Chip>)}
        </ChipStrip>
        <SettingsButton>设置</SettingsButton>
      </Periods>

      <Overlays>
        <Picker small label="主图指标" value="均线" options={["均线", "BOLL"]} />
        <OverlayValues>
          <Value $color="#111">MA5:51.16<Arrow height={22} /></Value>
          <Value $color={C.yellow}>10:52.22<Arrow height={22} /></Value>
          <Value $color={C.magenta}>20:49.50<Arrow up height={22} /></Value>
        </OverlayValues>
        <ToolButton>DK点<Corner width="12" height="12" viewBox="0 0 12 12"><path d="M12 0v12H0z" fill="#222" /></Corner></ToolButton>
        <ToolButton>前复权</ToolButton>
      </Overlays>

      <Charts>
        <Column>
          <Frame>
            <CandleChart />
            <ChartControls>
              <RoundButton $muted aria-label="最早">
                <svg width="18" height="20" viewBox="0 0 18 20" fill="none" stroke="currentColor" strokeWidth="2"><path d="M10 1l-9 9 9 9M17 1l-9 9 9 9" /></svg>
              </RoundButton>
              <RoundButton aria-label="缩小">
                <svg width="22" height="22" viewBox="0 0 22 22" stroke="currentColor" strokeWidth="2"><path d="M0 11h22" /></svg>
              </RoundButton>
              <RoundButton aria-label="放大">
                <svg width="22" height="22" viewBox="0 0 22 22" stroke="currentColor" strokeWidth="2"><path d="M0 11h22M11 0v22" /></svg>
              </RoundButton>
              <RoundButton aria-label="向左">
                <svg width="12" height="22" viewBox="0 0 12 22" fill="none" stroke="currentColor" strokeWidth="2.500"><path d="M11 1L1 11l10 10" /></svg>
              </RoundButton>
              <RoundButton $muted $dark aria-label="向右">
                <svg width="12" height="22" viewBox="0 0 12 22" fill="none" stroke="currentColor" strokeWidth="2.500"><path d="M1 1l10 10L1 21" /></svg>
              </RoundButton>
              <RoundButton aria-label="全屏">
                <svg width="24" height="24" viewBox="0 0 24 24" fill="none" stroke="currentColor" strokeWidth="2.500"><path d="M2 10V2h8M2 2l8 8M22 14v8h-8M22 22l-8-8" /></svg>
              </RoundButton>
            </ChartControls>
          </Frame>

          <Indicator next name="成交额" size={19} values={[["36.85亿", C.ink], ["MA1:49.86亿", C.yellow], ["MA2:63.19亿", C.violet]]}>
            <VolumeChart />
          </Indicator>
          <Indicator name="MACD" size={23} values={[["DIF:1.99", C.ink], ["DEA:2.67", C.yellow], ["M:−1.35", C.violet]]}>
            <MacdChart />
          </Indicator>
          <Indicator name="DDY" size={13} values={[["−0.237", C.ink, true], ["DDY1:−40.007", C.yellow, true], ["DDY2:−38.129", C.violet], ["DDY3:−36.910", C.down]]}>
            <DdyChart />
          </Indicator>
          <Indicator name="资金博弈" size={14} values={[["超大:−7.302", C.up, true], ["大户:−9.943", C.yellow, true], ["中户:0.251", C.navy], ["小户:16.994", C.down]]}>
            <FundsChart />
          </Indicator>

          <Axis>
            <AxisTicks />
            <AxisLabels>
              <AxisLabel>20250820 11:30</AxisLabel>
              <AxisLabel $faded>905 11:30</AxisLabel>
              <AxisLabel $last>0924 15:00</AxisLabel>
            </AxisLabels>
          </Axis>
          <RangeBox>
            <RangeInput type="range" aria-label="起始时间" min="0" max="100" defaultValue="0" />
            <RangeInput type="range" aria-label="结束时间" min="0" max="100" defaultValue="100" />
          </RangeBox>
        </Column>

        <Column>
          <Frame><CostChart /></Frame>
          <Legend>
            <LegendItem $color="#72b955">套牢</LegendItem>
            <LegendItem $color="#d9534e">获利</LegendItem>
            <LegendItem $color="#4880de">平均</LegendItem>
          </Legend>
          <Facts>
            <Fact><FactName>获利比例:</FactName><FactValue>47.49%</FactValue></Fact>
            <Fact><FactName>平均成本:</FactName><FactValue>50.08</FactValue></Fact>
            <Fact><FactName>90%成本:</FactName><FactValue>34.22-54.50</FactValue></Fact>
            <Fact><FactName>集中度:</FactName><FactValue>22.86%</FactValue></Fact>
          </Facts>
          <Explain>
            <ExplainButton>
              说明
              <svg width="20" height="20" viewBox="0 0 20 20"><circle cx="10" cy="10" r="10" fill="#c8c8ca" /><path d="M10 4v3M10 8.500v7" stroke="#fff" strokeWidth="2.500" /></svg>
            </ExplainButton>
            <span>2025-09-24 15:00</span>
          </Explain>
        </Column>
      </Charts>

      <BottomBar>
        <BottomNav>
          <IndexItem>
            <svg width="14" height="8" viewBox="0 0 14 8"><path d="M7 0l7 8H0z" fill="#6a6a6c" /></svg>
            <IndexValue>3853.64</IndexValue>
            <IndexLine><Muted>上证</Muted>0.83%</IndexLine>
          </IndexItem>
          {NAV.map(([label, icon]) => <NavItem key={label}>{icon}{label}</NavItem>)}
        </BottomNav>
        <HomeIndicator />
      </BottomBar>
    </Page>
  );
}
